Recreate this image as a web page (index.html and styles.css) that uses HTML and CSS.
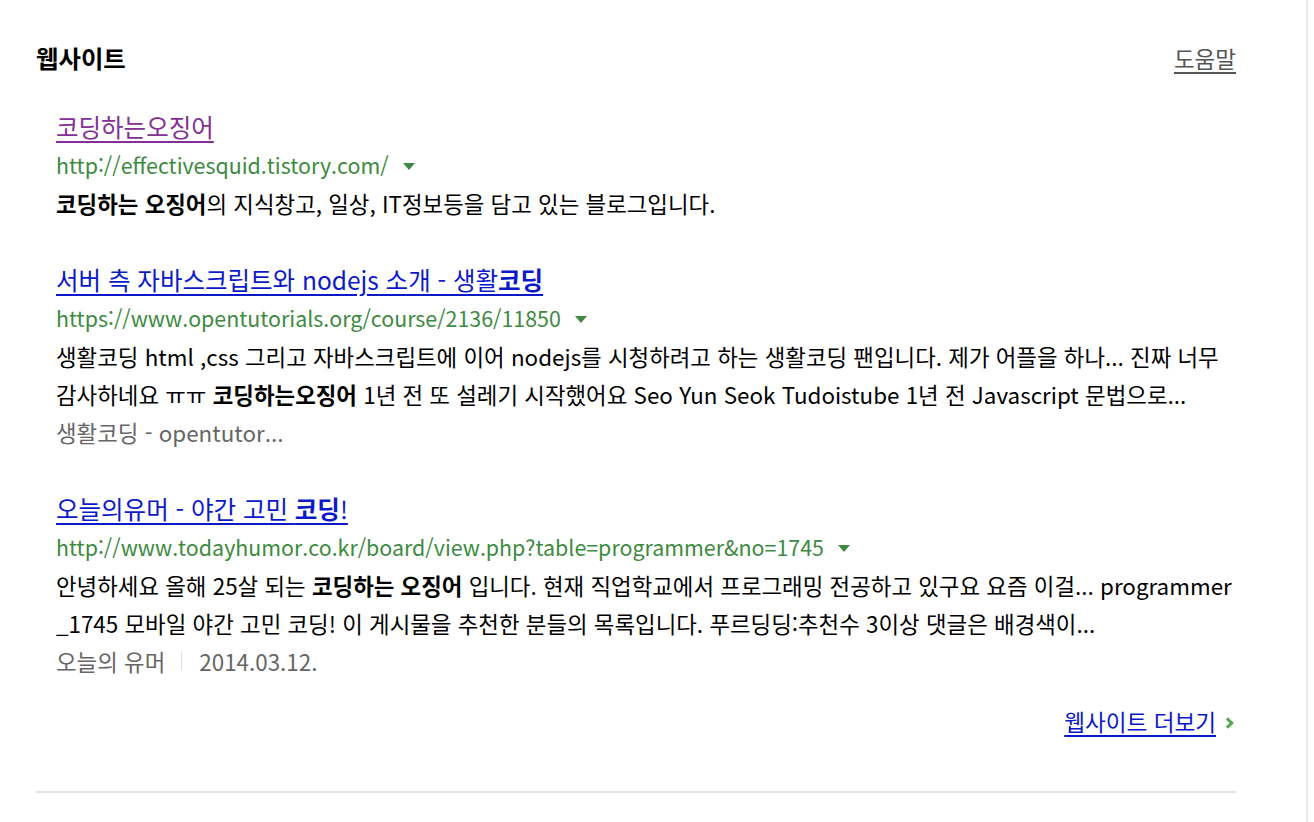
FILE: index.html
```html
<!DOCTYPE html>
<html lang="ko">
<head>
<meta charset="utf-8">
<link rel="stylesheet" href="styles.css">
</head>
<body>
<div class="page">
  <section class="section">
    <div class="section-head">
      <h2 class="section-title">웹사이트</h2>
      <a class="help" href="#">도움말</a>
    </div>
    <ul class="results">
      <li class="result">
        <a class="title visited" href="#">코딩하는오징어</a>
        <div class="url">http://effectivesquid.tistory.com/<span class="caret"></span></div>
        <p class="desc"><b>코딩하는 오징어</b>의 지식창고, 일상, IT정보등을 담고 있는 블로그입니다.</p>
      </li>
      <li class="result">
        <a class="title" href="#">서버 측 자바스크립트와 nodejs 소개 - 생활<b>코딩</b></a>
        <div class="url">https://www.opentutorials.org/course/2136/11850<span class="caret"></span></div>
        <p class="desc">생활코딩 html ,css 그리고 자바스크립트에 이어 nodejs를 시청하려고 하는 생활코딩 팬입니다. 제가 어플을 하나... 진짜 너무<br>감사하네요 ㅠㅠ <b>코딩하는오징어</b> 1년 전 또 설레기 시작했어요 Seo Yun Seok Tudoistube 1년 전 Javascript 문법으로...</p>
        <div class="meta"><span>생활코딩 - opentutor...</span></div>
      </li>
      <li class="result">
        <a class="title" href="#">오늘의유머 - 야간 고민 <b>코딩</b>!</a>
        <div class="url">http://www.todayhumor.co.kr/board/view.php?table=programmer&amp;no=1745<span class="caret"></span></div>
        <p class="desc">안녕하세요 올해 25살 되는 <b>코딩하는 오징어</b> 입니다. 현재 직업학교에서 프로그래밍 전공하고 있구요 요즘 이걸... programmer<br>_1745 모바일 야간 고민 코딩! 이 게시물을 추천한 분들의 목록입니다. 푸르딩딩:추천수 3이상 댓글은 배경색이...</p>
        <div class="meta"><span>오늘의 유머</span><span class="sep"></span><span>2014.03.12.</span></div>
      </li>
    </ul>
    <div class="more-row">
      <a class="more" href="#">웹사이트 더보기</a><span class="chev"></span>
    </div>
  </section>
</div>
</body>
</html>
```

FILE: styles.css
```css
* { box-sizing: border-box; }
html, body { margin: 0; padding: 0; background: #fff; }
body {
  font-family: "Noto Sans CJK KR", "Noto Sans", sans-serif;
  color: #000;
}
.page {
  width: 1308px;
  min-height: 822px;
  border-right: 2px solid #e8e8e8;
}
.section {
  margin-left: 36px;
  width: 1200px;
  padding-top: 39px;
  padding-bottom: 50px;
  border-bottom: 2px solid #e5e5e5;
}
.section-head {
  display: flex;
  justify-content: space-between;
  align-items: center;
  height: 38px;
}
.section-title {
  margin: 0;
  font-size: 24.4px;
  font-weight: 700;
  line-height: 38px;
}
.help {
  font-size: 22.5px;
  color: #555;
  line-height: 38px;
  text-decoration: underline;
  text-underline-offset: 4px;
}
.results {
  list-style: none;
  margin: 31px 0 0;
  padding: 0 0 0 20px;
  display: flex;
  flex-direction: column;
  gap: 39px;
}
.result { display: flex; flex-direction: column; align-items: flex-start; }
.title {
  font-size: 24.5px;
  line-height: 38px;
  color: #0c19c8;
  text-decoration: underline;
  text-underline-offset: 4px;
}
.title b { font-weight: 700; }
.title.visited { color: #842f95; }
.url {
  font-size: 21.4px;
  line-height: 38px;
  color: #3d8a41;
  display: flex;
  align-items: center;
}
.caret {
  display: inline-block;
  width: 0; height: 0;
  margin-left: 14px;
  margin-top: 3px;
  border-left: 6px solid transparent;
  border-right: 6px solid transparent;
  border-top: 7px solid #3d8a41;
}
.desc {
  margin: 0;
  font-size: 22.4px;
  line-height: 38px;
  color: #000;
  white-space: nowrap;
}
.desc b { font-weight: 700; color: #000; }
.meta {
  font-size: 22.4px;
  line-height: 38px;
  color: #666;
  display: flex;
  align-items: center;
}
.sep {
  display: inline-block;
  width: 1px;
  height: 18px;
  background: #e0e0e0;
  margin: 0 17px 0 16px;
}
.more-row {
  margin-top: 23px;
  display: flex;
  justify-content: flex-end;
  align-items: center;
  line-height: 38px;
}
.more {
  font-size: 22.6px;
  color: #0c19c8;
  text-decoration: underline;
  text-underline-offset: 4px;
}
.chev {
  display: inline-block;
  width: 8px; height: 8px;
  border-top: 3px solid #55a84f;
  border-right: 3px solid #55a84f;
  transform: rotate(45deg);
  margin-left: 8px;
  margin-right: 4px;
  margin-top: 2px;
}
```
